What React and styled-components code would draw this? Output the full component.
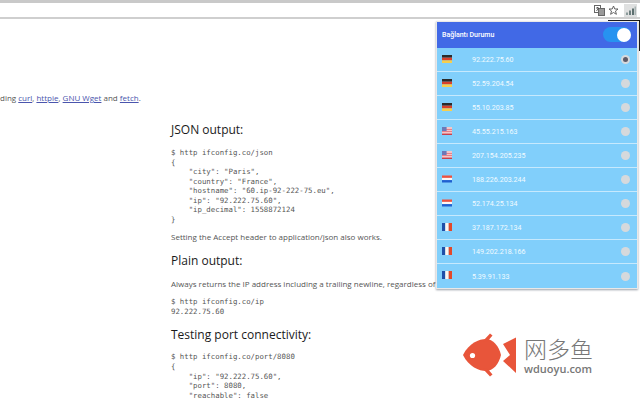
import React from "react";
import styled, { createGlobalStyle } from "styled-components";

const Global = createGlobalStyle`
  html, body { margin: 0; padding: 0; background: #fff; }
`;

const Page = styled.div`
  position: relative;
  width: 640px;
  height: 400px;
  overflow: hidden;
  background: #fff;
  font-family: "Open Sans", sans-serif;
  color: #444;
`;

const Chrome = styled.header`
  height: 14px;
  border-top: 3px solid #c9c9c9;
  border-bottom: 2px solid #cfcfcf;
  display: flex;
  align-items: center;
  justify-content: flex-end;
  gap: 3px;
  padding-right: 3px;
  background: #fff;
`;

const ToolIcon = styled.svg`
  display: block;
  flex: none;
`;

const ExtButton = styled.div`
  width: 13px;
  height: 13px;
  margin-left: 2px;
  margin-top: 1px;
  background: #dfe0e0;
  display: flex;
  align-items: center;
  justify-content: center;
`;

const Intro = styled.p`
  margin: 72px 0 0;
  height: 13px;
  font-size: 8px;
  line-height: 13px;
  white-space: nowrap;
  color: #555;
`;

const Link = styled.a`
  color: #4a55ad;
  text-decoration: underline;
`;

const Article = styled.main`
  margin-left: 171px;
  white-space: nowrap;
`;

const Heading = styled.h2`
  margin: ${(p) => p.$top}px 0 0;
  font-size: 12px;
  line-height: 18px;
  font-weight: 400;
  color: #1a1a1a;
`;

const Code = styled.pre`
  margin: ${(p) => p.$top}px 0 0;
  font-family: "DejaVu Sans Mono", monospace;
  font-size: 7.35px;
  line-height: 9.55px;
  color: #555;
`;

const Body = styled.p`
  margin: ${(p) => p.$top}px 0 0;
  font-size: 8px;
  line-height: 12px;
  color: #555;
`;

const Popup = styled.aside`
  position: absolute;
  left: 437px;
  top: 22px;
  width: 200px;
  background: #81cffb;
  box-shadow: 0 0 0 1px #e8e8e8, 0 1px 2px 1px #9aa0a8;
`;

const PopupHead = styled.div`
  height: 26px;
  background: #4169e6;
  display: flex;
  align-items: center;
  justify-content: space-between;
  padding: 0 6px 0 5px;
  color: #fff;
  font-family: Roboto, sans-serif;
  font-size: 7px;
  font-weight: 500;
`;

const Toggle = styled.div`
  position: relative;
  width: 28px;
  height: 15px;
  border-radius: 8px;
  background: #2793f0;
  margin-top: -1px;
`;

const Knob = styled.span`
  position: absolute;
  right: 0;
  top: 1px;
  width: 14px;
  height: 14px;
  border-radius: 50%;
  background: #fff;
`;

const Row = styled.div`
  box-sizing: border-box;
  height: 24px;
  display: flex;
  align-items: center;
  padding: 0 7px 0 5px;
  border-bottom: 1px solid #c6e9fd;
  &:last-child { border-bottom: none; }
`;

const Ip = styled.span`
  margin-left: 20px;
  flex: 1;
  font-family: Roboto, sans-serif;
  font-size: 7.1px;
  color: #f2fbff;
`;

const Radio = styled.span`
  width: 9px;
  height: 9px;
  border-radius: 50%;
  background: #d6d9dc;
  display: flex;
  align-items: center;
  justify-content: center;
  &::after {
    content: "";
    display: ${(p) => (p.$on ? "block" : "none")};
    width: 5px;
    height: 5px;
    border-radius: 50%;
    background: #5d5a68;
  }
`;

const FlagSvg = styled.svg`
  display: block;
  flex: none;
  margin-top: -2px;
`;

const Flag = ({ c }) => (
  <FlagSvg width="10" height="8" viewBox="0 0 10 8">
    {c === "de" && (
      <>
        <rect width="10" height="2.7" fill="#2b2b2b" />
        <rect y="2.7" width="10" height="2.7" fill="#d9412b" />
        <rect y="5.4" width="10" height="2.6" fill="#f7cf4d" />
      </>
    )}
    {c === "us" && (
      <>
        <rect width="10" height="8" fill="#f3c6c8" />
        <rect y="2" width="10" height="1" fill="#e87f88" />
        <rect y="4" width="10" height="1" fill="#e87f88" />
        <rect y="6.6" width="10" height="1.4" fill="#c8404c" />
        <rect width="4.6" height="4" fill="#6c79b8" />
      </>
    )}
    {c === "nl" && (
      <>
        <rect y="0.5" width="10" height="2.4" fill="#f0503c" />
        <rect y="2.9" width="10" height="2.2" fill="#fdf6f4" />
        <rect y="5.1" width="10" height="2.4" fill="#2060d0" />
      </>
    )}
    {c === "fr" && (
      <>
        <rect width="3.3" height="8" fill="#1f4fa8" />
        <rect x="3.3" width="3.4" height="8" fill="#fdf6f0" />
        <rect x="6.7" width="3.3" height="8" fill="#e2482a" />
      </>
    )}
  </FlagSvg>
);

const Watermark = styled.div`
  position: absolute;
  left: 463px;
  top: 332px;
  display: flex;
  gap: 8px;
`;

const Brand = styled.div`
  display: flex;
  flex-direction: column;
  padding-top: 3px;
`;

const BrandCn = styled.span`
  font-family: "Noto Sans CJK SC", sans-serif;
  font-size: 23px;
  line-height: 27px;
  font-weight: 300;
  color: #777;
`;

const BrandEn = styled.span`
  margin-top: 1px;
  font-family: "Open Sans", sans-serif;
  font-size: 11px;
  line-height: 12px;
  font-weight: 600;
  color: #777;
`;

const Corner = styled.div`
  position: absolute;
  left: 608px;
  top: 20px;
  width: 31px;
  height: 30px;
  border-top: 1px solid #111;
  border-right: 1px solid #111;
`;

const servers = [
  ["de", "92.222.75.60", true],
  ["de", "52.59.204.54"],
  ["de", "55.10.203.85"],
  ["us", "45.55.215.163"],
  ["us", "207.154.205.235"],
  ["nl", "188.226.203.244"],
  ["nl", "52.174.25.134"],
  ["fr", "37.187.172.134"],
  ["fr", "149.202.218.166"],
  ["fr", "5.39.91.133"],
];

export default function App() {
  return (
    <Page>
      <Global />
      <Chrome>
        <ToolIcon width="11" height="11" viewBox="0 0 11 11">
          <rect x="0.5" y="0.5" width="6" height="7" fill="#fff" stroke="#666" />
          <rect x="4.5" y="3.5" width="6" height="7" fill="#999" stroke="#666" />
          <path d="M2 3h3M3.5 2v1M2.5 6l2-3" stroke="#444" strokeWidth="0.8" fill="none" />
        </ToolIcon>
        <ToolIcon width="11" height="11" viewBox="0 0 11 11">
          <path d="M5.5 1l1.3 3h3.2L7.5 6l.9 3.3-2.9-1.8-2.9 1.8.9-3.3L1 4h3.2z" fill="none" stroke="#555" strokeWidth="0.9" />
        </ToolIcon>
        <ExtButton>
          <ToolIcon width="10" height="9" viewBox="0 0 10 9">
            <rect x="0" y="6.5" width="2" height="2.5" fill="#8a9a9a" />
            <rect x="3" y="4.5" width="2" height="4.5" fill="#6f8080" />
            <rect x="6" y="2.5" width="2" height="6.5" fill="#5d6f6f" />
            <rect x="8.5" y="0.5" width="1.5" height="8.5" fill="#a9b4b4" />
          </ToolIcon>
        </ExtButton>
      </Chrome>

      <Intro>
        ding <Link>curl</Link>, <Link>httpie</Link>, <Link>GNU Wget</Link> and <Link>fetch</Link>.
      </Intro>

      <Article>
        <Heading $top={17}>JSON output:</Heading>
        <Code $top={9}>{`$ http ifconfig.co/json
{
    "city": "Paris",
    "country": "France",
    "hostname": "60.ip-92-222-75.eu",
    "ip": "92.222.75.60",
    "ip_decimal": 1558872124
}`}</Code>
        <Body $top={7}>Setting the Accept header to application/json also works.</Body>
        <Heading $top={9}>Plain output:</Heading>
        <Body $top={8}>Always returns the IP address including a trailing newline, regardless of</Body>
        <Code $top={7}>{`$ http ifconfig.co/ip
92.222.75.60`}</Code>
        <Heading $top={10}>Testing port connectivity:</Heading>
        <Code $top={8}>{`$ http ifconfig.co/port/8080
{
    "ip": "92.222.75.60",
    "port": 8080,
    "reachable": false`}</Code>
      </Article>

      <Corner />
      <Popup>
        <PopupHead>
          <span>Bağlantı Durumu</span>
          <Toggle>
            <Knob />
          </Toggle>
        </PopupHead>
        {servers.map(([c, ip, on]) => (
          <Row key={ip}>
            <Flag c={c} />
            <Ip>{ip}</Ip>
            <Radio $on={on} />
          </Row>
        ))}
      </Popup>

      <Watermark>
        <svg width="53" height="46" viewBox="0 0 53 46">
          <path d="M0 23 C6 11 16 7 23 7 C30 7 36 14 38 23 C36 32 30 39 23 39 C16 39 6 35 0 23Z" fill="#e8553a" />
          <path d="M20 9 L27 1.5 L29.5 3.5 L24 10Z M20 37 L27 44.500 L29.5 42.500 L24 36Z" fill="#e8553a" />
          <path d="M53 5.500 V41 L40 29 L47 23 L40 12Z" fill="#e8553a" />
          <circle cx="9.500" cy="23.500" r="2.600" fill="#fff" />
        </svg>
        <Brand>
          <BrandCn>网多鱼</BrandCn>
          <BrandEn>wduoyu.com</BrandEn>
        </Brand>
      </Watermark>
    </Page>
  );
}
